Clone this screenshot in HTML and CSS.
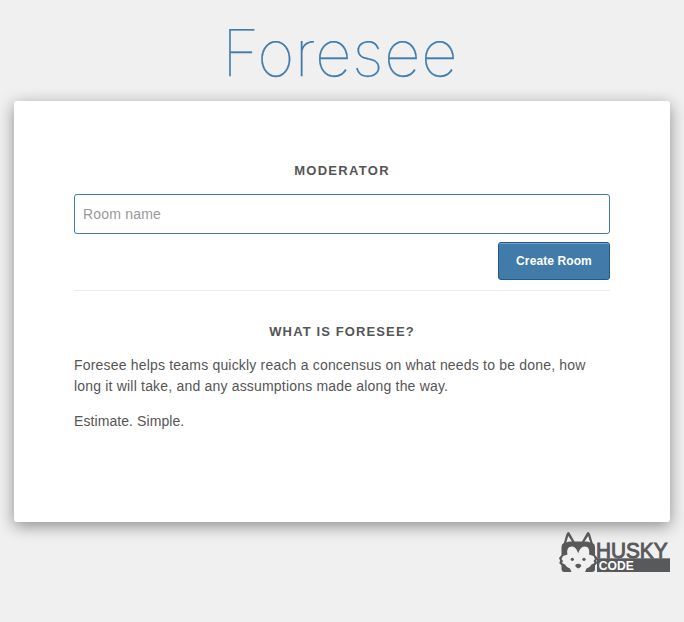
FILE: index.html
```html
<!DOCTYPE html>
<html lang="en">
<head>
<meta charset="utf-8">
<title>Foresee</title>
<link rel="stylesheet" href="styles.css">
</head>
<body>
<h1 class="brand">Foresee</h1>
<main class="panel">
  <form class="room-form">
    <h2 class="heading">Moderator</h2>
    <input class="room-input" type="text" placeholder="Room name">
    <button class="create-button" type="button">Create Room</button>
  </form>
  <section class="about">
    <h2 class="heading about-heading">What is Foresee?</h2>
    <p class="copy">Foresee helps teams quickly reach a concensus on what needs to be done, how long it will take, and any assumptions made along the way.</p>
    <p class="copy tagline">Estimate. Simple.</p>
  </section>
</main>
<footer class="footer">
  <svg class="logo" width="112" height="42" viewBox="558 530 112 42" role="img" aria-label="Husky Code">
    <path class="ink" d="M563.800 543L566.500 534Q568 530.500 569.700 533L574.500 541.500H582L586.800 533Q588.500 530.500 590 534L592.700 543Q595 544 595 547V555L597.500 558L596.300 561L597.300 563L595 565.500V569Q595 572 592 572H564.500Q561.500 572 561.500 569V565.500L559.200 563L560.200 561L559 558L561.500 555V547Q561.500 544 563.800 543Z"/>
    <path class="fur" d="M566.300 542.500L568.300 536L572 541.500Q568.500 541 566.300 542.500ZM590.200 542.500L588.200 536L584.500 541.500Q588 541 590.200 542.500ZM578.200 553.500C579.500 549.500 581.500 546.500 584.500 546.500C588.500 546.500 590 550 589 554.500L593.500 556L595 559L593.500 561L594.500 563L591.500 564.500L589.500 567L586.500 568.500L585 572H571.500L570 568.500L567 567L565 564.500L562 563L563 561L561.500 559L563 556L567.500 554.500C566.500 550 568 546.500 572 546.500C575 546.500 577 549.500 578.200 553.500Z"/>
    <circle class="ink" cx="572.300" cy="559.300" r="1.600"/><circle class="ink" cx="584" cy="559.300" r="1.600"/>
    <path class="ink" d="M575.200 565Q578.200 562.500 581.200 565Q581.500 567 578.200 568.500Q575 567 575.200 565Z"/>
    <rect class="ink" x="597" y="558.300" width="73" height="13.700"/>
    <text class="husky" x="596" y="558" textLength="71.500" lengthAdjust="spacingAndGlyphs">HUSKY</text>
    <text class="code" x="598.800" y="570" textLength="35" lengthAdjust="spacingAndGlyphs">CODE</text>
  </svg>
</footer>
</body>
</html>
```

FILE: styles.css
```css
* { box-sizing: border-box; }
body {
  margin: 0;
  padding: 14px;
  min-height: 622px;
  background: #f0f0f0;
  color: #555;
  font: 14px/21px "Liberation Sans", Arial, sans-serif;
}
.brand {
  margin: 0;
  height: 87px;
  padding-right: 4px;
  text-align: center;
  color: #417baa;
  font: 100 64px/77px Inter, sans-serif;
  letter-spacing: .45px;
  -webkit-text-stroke: .25px #417baa;
}
.panel {
  height: 421px;
  padding: 60px;
  border-radius: 3px;
  background: #fff;
  box-shadow: 0 4px 16px rgba(0, 0, 0, .42);
}
.room-form {
  display: flex;
  flex-direction: column;
  height: 130px;
  border-bottom: 1px solid #eaeaea;
}
.heading {
  margin: 0;
  height: 33px;
  text-align: center;
  text-transform: uppercase;
  font-size: 13px;
  line-height: 20px;
  letter-spacing: 1.3px;
}
.room-input {
  width: 100%;
  height: 40px;
  padding: 0 8px;
  border: 1px solid #417baa;
  border-radius: 3px;
  background: #fff;
  color: #555;
  font: inherit;
  letter-spacing: .2px;
}
.room-input::placeholder { color: #999; opacity: 1; }
.create-button {
  align-self: flex-end;
  width: 112px;
  height: 38px;
  margin-top: 8px;
  padding: 0;
  border: 1px solid #24568a;
  border-radius: 3px;
  background: #417baa;
  box-shadow: inset 0 1px #76a4ca;
  color: #fff;
  font: bold 12px/36px "Liberation Sans", Arial, sans-serif;
  letter-spacing: .1px;
}
.about-heading { margin-top: 31px; letter-spacing: 1.12px; }
.copy { margin: 0 0 14px; letter-spacing: .19px; }
.tagline { letter-spacing: .08px; }
.footer { display: flex; justify-content: flex-end; padding-top: 8px; }
.logo { display: block; }
.ink { fill: #58595b; }
.fur { fill: #f0f0f0; }
.husky { fill: #58595b; font: 22.5px "Liberation Sans", Arial, sans-serif; stroke: #58595b; stroke-width: 1px; }
.code { fill: #fff; font: bold 13px "Liberation Sans", Arial, sans-serif; }
```
